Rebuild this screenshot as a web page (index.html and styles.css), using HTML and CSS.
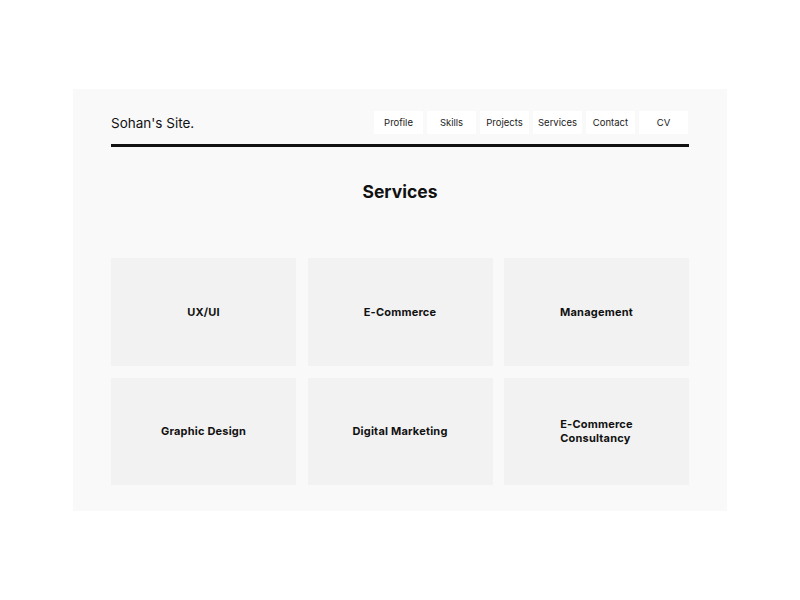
FILE: index.html
```html
<!DOCTYPE html>
<html lang="en">
<head>
<meta charset="utf-8">
<title>Sohan's Site - Services</title>
<link rel="stylesheet" href="styles.css">
</head>
<body>
<div class="page">
  <div class="panel">
    <header class="header">
      <div class="logo">Sohan's Site.</div>
      <nav class="nav">
        <a class="nav-btn" href="#">Profile</a>
        <a class="nav-btn" href="#">Skills</a>
        <a class="nav-btn" href="#">Projects</a>
        <a class="nav-btn" href="#">Services</a>
        <a class="nav-btn" href="#">Contact</a>
        <a class="nav-btn" href="#">CV</a>
      </nav>
    </header>
    <h1 class="title">Services</h1>
    <section class="grid">
      <div class="card"><p class="card-text">UX/UI</p></div>
      <div class="card"><p class="card-text">E-Commerce</p></div>
      <div class="card"><p class="card-text">Management</p></div>
      <div class="card"><p class="card-text">Graphic Design</p></div>
      <div class="card"><p class="card-text">Digital Marketing</p></div>
      <div class="card"><p class="card-text">E-Commerce<br>Consultancy</p></div>
    </section>
  </div>
</div>
</body>
</html>
```
FILE: styles.css
```css
* { box-sizing: border-box; }
html, body { margin: 0; padding: 0; background: #ffffff; }
body {
  font-family: Inter, "Open Sans", "Liberation Sans", sans-serif;
  color: #111;
}
.page {
  padding: 89px 73px;
}
.panel {
  background: #f9f9f9;
  padding: 22px 38px 26px;
}
.header {
  display: flex;
  justify-content: space-between;
  align-items: center;
  padding-bottom: 10px;
  border-bottom: 3px solid #111;
}
.logo {
  font-size: 13.5px;
  color: #111;
}
.nav {
  display: flex;
  gap: 4px;
  margin-right: 1px;
}
.nav-btn {
  width: 49px;
  height: 23px;
  display: flex;
  align-items: center;
  justify-content: center;
  background: #ffffff;
  color: #222;
  font-size: 9.5px;
  text-decoration: none;
}
.title {
  margin: 34px 0 0;
  height: 22px;
  line-height: 22px;
  text-align: center;
  font-size: 17.5px;
  font-weight: 700;
  color: #111;
}
.grid {
  margin-top: 55px;
  display: grid;
  grid-template-columns: repeat(3, 1fr);
  grid-auto-rows: 107.5px;
  column-gap: 11.5px;
  row-gap: 12px;
}
.card {
  background: #f2f2f2;
  display: flex;
  align-items: center;
  justify-content: center;
}
.card-text {
  margin: 0;
  font-size: 11px;
  font-weight: 700;
  line-height: 14px;
  text-align: left;
  color: #111;
  letter-spacing: 0.2px;
}
```
